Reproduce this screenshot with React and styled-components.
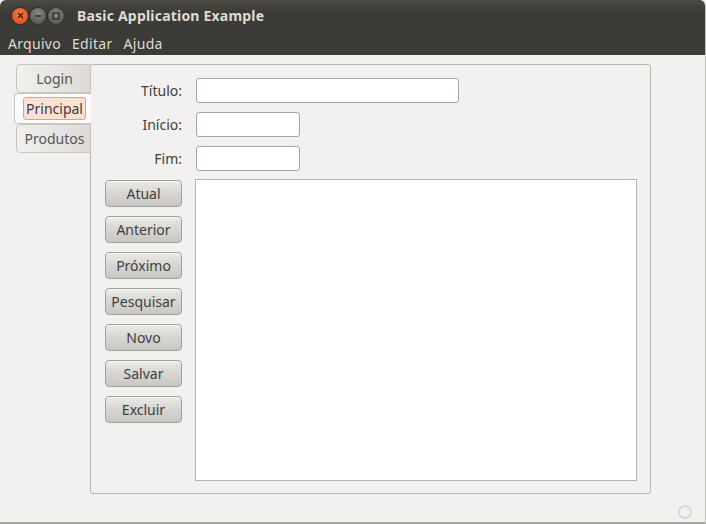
import React from "react";
import styled, { createGlobalStyle } from "styled-components";

const GlobalStyle = createGlobalStyle`
  html, body {
    margin: 0;
    padding: 0;
    background: #f2f1f0;
  }
  body {
    font-family: "Noto Sans", "DejaVu Sans", sans-serif;
  }
`;

const Window = styled.div`
  width: 706px;
  height: 524px;
  display: flex;
  flex-direction: column;
  box-sizing: border-box;
  border-bottom: 2px solid #a8a6a2;
  border-right: 1px solid #c4c2be;
  background: #f2f1f0;
  border-radius: 6px 6px 0 0;
  overflow: hidden;
`;

const TitleBar = styled.div`
  height: 31px;
  display: flex;
  align-items: center;
  padding-left: 12px;
  background: linear-gradient(#4b4a45, #3c3b37 40%);
  color: #dfdbd2;
`;

const WinButton = styled.span`
  width: 16px;
  height: 16px;
  border-radius: 50%;
  margin-right: 2px;
  display: flex;
  align-items: center;
  justify-content: center;
  background: ${(p) =>
    p.close
      ? "radial-gradient(circle at 50% 35%, #f7804d, #e2541f 70%)"
      : "radial-gradient(circle at 50% 35%, #8a8983, #5d5c57 70%)"};
  box-shadow: 0 0 0 1px #2e2d2a;
`;

const Title = styled.div`
  margin-left: 11px;
  font-weight: bold;
  font-size: 14px;
  letter-spacing: 0.2px;
`;

const MenuBar = styled.div`
  height: 24px;
  display: flex;
  align-items: center;
  padding-left: 8px;
  gap: 11px;
  background: #3c3b37;
  color: #dfdbd2;
  font-size: 14px;
  letter-spacing: 0.3px;
`;

const Body = styled.div`
  flex: 1;
  display: flex;
  flex-direction: column;
  padding: 9px 0 0 14px;
  position: relative;
`;

const Notebook = styled.div`
  display: flex;
  align-items: flex-start;
`;

const TabList = styled.div`
  display: flex;
  flex-direction: column;
  width: 77px;
  margin-right: -1px;
  z-index: 1;
`;

const Tab = styled.div`
  height: ${(p) => (p.active ? "31px" : "29px")};
  margin-left: ${(p) => (p.active ? "0" : "2px")};
  box-sizing: border-box;
  display: flex;
  align-items: center;
  justify-content: center;
  font-size: 14px;
  color: #555;
  border: 1px solid #c9c6c1;
  border-right: ${(p) => (p.active ? "none" : "1px solid #c9c6c1")};
  border-radius: 4px 0 0 4px;
  background: ${(p) =>
    p.active ? "#fbfbfa" : "linear-gradient(to right, #f1f0ee, #dedbd7)"};
  padding-left: ${(p) => (p.active ? "3px" : "2px")};
`;

const TabFocus = styled.span`
  padding: 1px 2px;
  border: 1px solid #f29b74;
  border-radius: 3px;
  background: #fbe0d5;
  color: #3c3c3c;
`;

const Panel = styled.div`
  width: 561px;
  height: 430px;
  box-sizing: border-box;
  border: 1px solid #b9b6b0;
  border-radius: 3px;
  background: #f2f1f0;
  padding: 13px 13px 12px 14px;
  display: flex;
  flex-direction: column;
`;

const FormRow = styled.div`
  display: flex;
  align-items: center;
  gap: 14px;
  margin-bottom: ${(p) => p.mb || "9px"};
`;

const Label = styled.label`
  width: 77px;
  text-align: right;
  font-size: 14px;
  color: #404040;
`;

const Input = styled.div`
  width: ${(p) => p.w}px;
  height: 25px;
  box-sizing: border-box;
  background: #fff;
  border: 1px solid #a9a6a0;
  border-radius: 3px;
`;

const Lower = styled.div`
  display: flex;
  gap: 13px;
  flex: 1;
`;

const Buttons = styled.div`
  display: flex;
  flex-direction: column;
  gap: 9px;
  padding-top: 1px;
`;

const Button = styled.button`
  width: 77px;
  height: 27px;
  box-sizing: border-box;
  font-family: inherit;
  font-size: 14px;
  color: #404040;
  border: 1px solid #a3a09a;
  border-radius: 4px;
  background: linear-gradient(#ecebe9, #d9d7d3 45%, #c9c7c3);
  box-shadow: inset 0 1px 0 rgba(255, 255, 255, 0.6);
  padding: 0;
`;

const TextArea = styled.div`
  width: 442px;
  height: 302px;
  box-sizing: border-box;
  background: #fff;
  border: 1px solid #b6b3ad;
`;

const Grip = styled.div`
  position: absolute;
  right: 13px;
  bottom: 3px;
  width: 10px;
  height: 10px;
  border-radius: 50%;
  border: 2px solid #d8d8dc;
`;

const buttons = ["Atual", "Anterior", "Próximo", "Pesquisar", "Novo", "Salvar", "Excluir"];

const App = () => {
  return (
    <>
      <GlobalStyle />
      <Window>
        <TitleBar>
          <WinButton close>
            <svg width="7" height="7" viewBox="0 0 7 7">
              <path d="M1 1L6 6M6 1L1 6" stroke="#3a1a0c" strokeWidth="1.4" />
            </svg>
          </WinButton>
          <WinButton>
            <svg width="8" height="8" viewBox="0 0 8 8">
              <path d="M1 4H7" stroke="#2e2d2a" strokeWidth="1.4" />
            </svg>
          </WinButton>
          <WinButton>
            <svg width="8" height="8" viewBox="0 0 8 8">
              <rect x="1" y="1" width="6" height="6" fill="none" stroke="#2e2d2a" strokeWidth="1.3" />
            </svg>
          </WinButton>
          <Title>Basic Application Example</Title>
        </TitleBar>
        <MenuBar>
          <span>Arquivo</span>
          <span>Editar</span>
          <span>Ajuda</span>
        </MenuBar>
        <Body>
          <Notebook>
            <TabList>
              <Tab>Login</Tab>
              <Tab active>
                <TabFocus>Principal</TabFocus>
              </Tab>
              <Tab>Produtos</Tab>
            </TabList>
            <Panel>
              <FormRow>
                <Label>Título:</Label>
                <Input w={263} />
              </FormRow>
              <FormRow>
                <Label>Início:</Label>
                <Input w={104} />
              </FormRow>
              <FormRow mb="8px">
                <Label>Fim:</Label>
                <Input w={104} />
              </FormRow>
              <Lower>
                <Buttons>
                  {buttons.map((b) => (
                    <Button key={b}>{b}</Button>
                  ))}
                </Buttons>
                <TextArea />
              </Lower>
            </Panel>
          </Notebook>
          <Grip />
        </Body>
      </Window>
    </>
  );
};

export default App;
